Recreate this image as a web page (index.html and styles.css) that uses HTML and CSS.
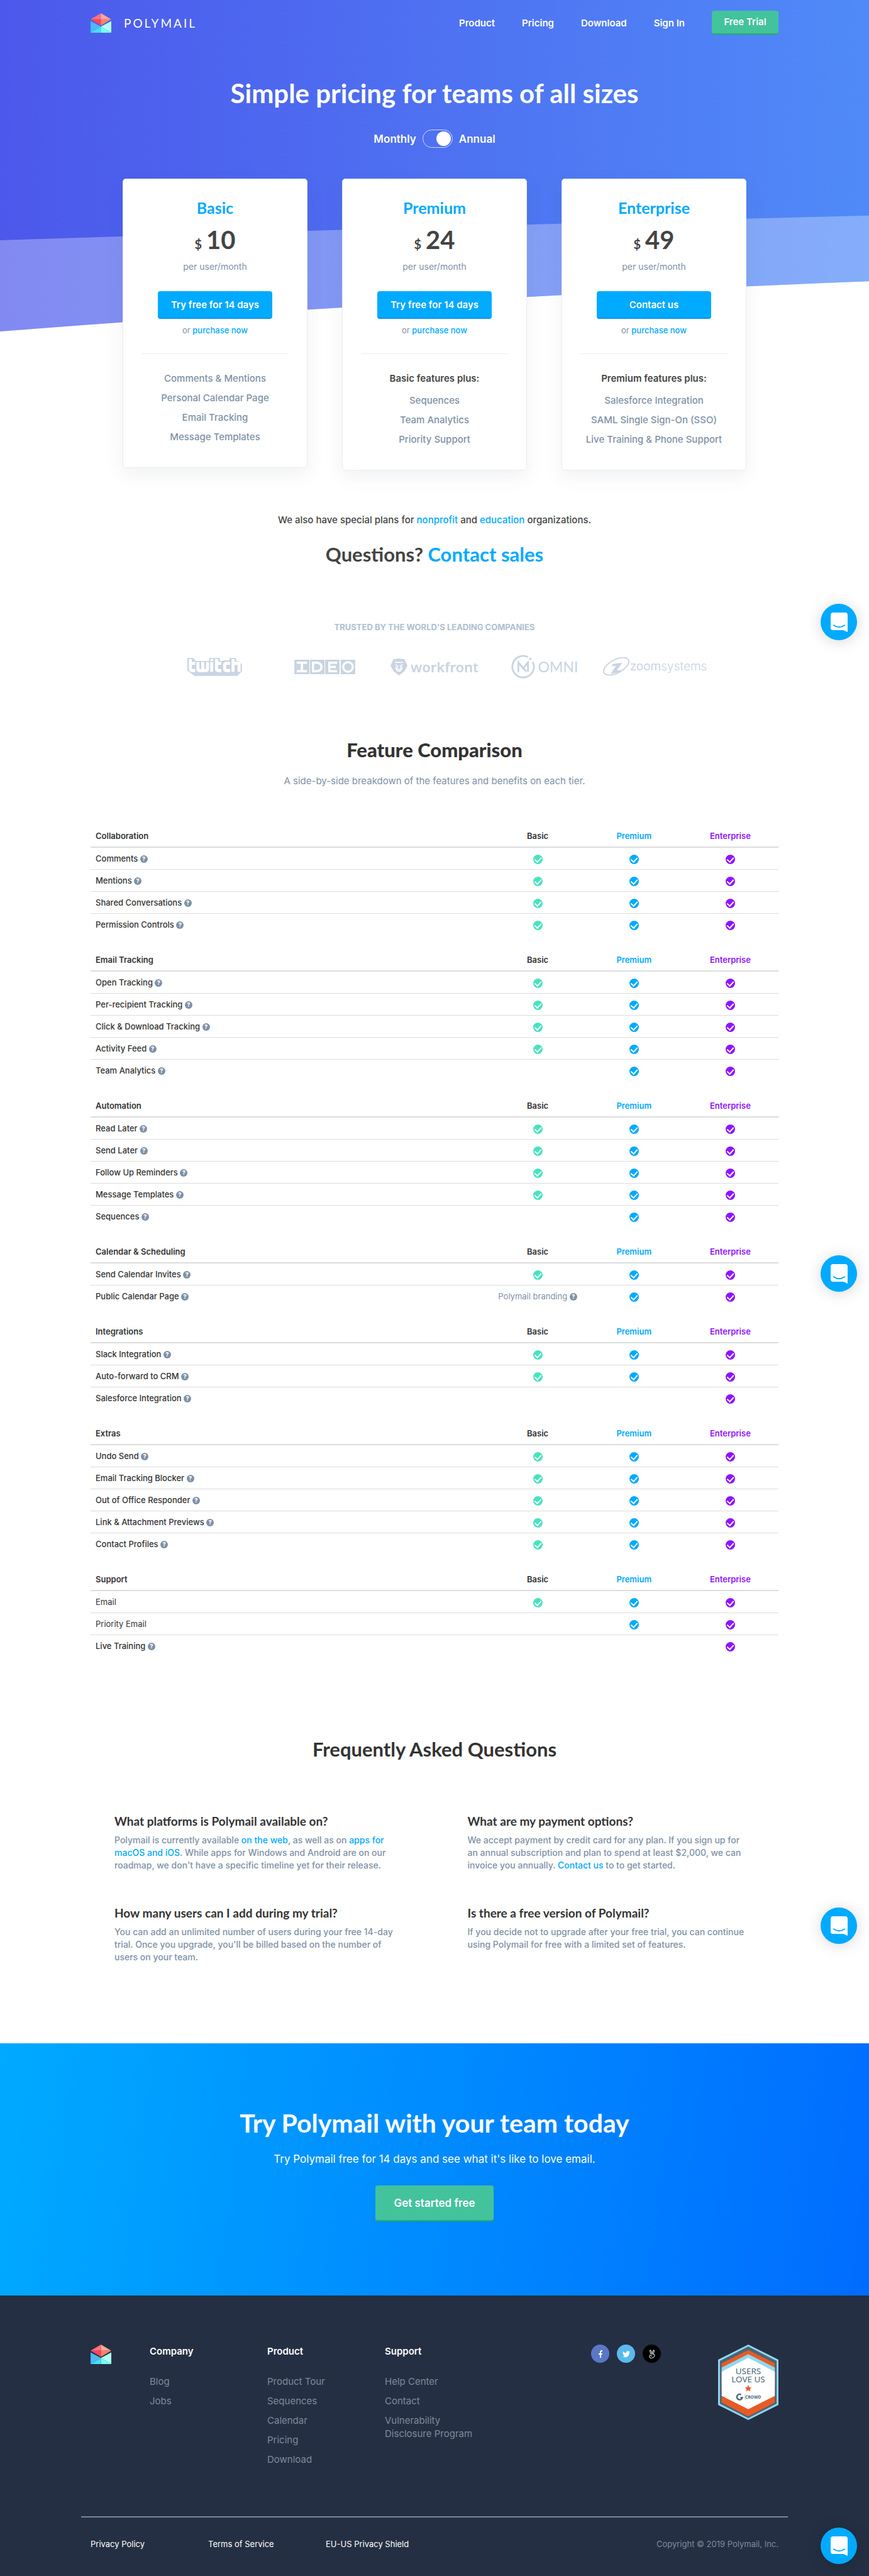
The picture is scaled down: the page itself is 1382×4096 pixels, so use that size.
FILE: index.html
```html
<!DOCTYPE html>
<html lang="en">
<head>
  <meta charset="utf-8">
  <title>Polymail Pricing</title>
  <meta name="viewport" content="width=device-width, initial-scale=1">
  <link rel="stylesheet" href="styles.css">
</head>
<body>
  <!-- shared icons -->
  <svg class="sprite" aria-hidden="true">
    <symbol id="logo" viewBox="0 0 34 32">
      <path fill="#ff7080" d="M17 0v10H0z"/>
      <path fill="#ffa699" d="M17 0v10h17z"/>
      <path fill="#ff4458" d="M0 10h17v10z"/>
      <path fill="#ff8366" d="M34 10H17v10z"/>
      <path fill="#4cb8f5" d="M0 13v19l17-10z"/>
      <path fill="#b0fff0" d="M34 13v19L17 22z"/>
      <path fill="#4adcf5" d="M0 32l17-10v10z"/>
      <path fill="#74fff0" d="M34 32L17 22v10z"/>
    </symbol>
    <symbol id="chat" viewBox="0 0 28 32">
      <path fill="#fff" d="M4 0h20a4 4 0 0 1 4 4v28l-7-3H4a4 4 0 0 1-4-4V4a4 4 0 0 1 4-4z"/>
      <path fill="none" stroke="#00aaff" stroke-width="2" stroke-linecap="round" d="M5 21q9 6 18 0"/>
    </symbol>
  </svg>

  <header class="hero">
    <svg class="hero-bg" viewBox="0 0 1440 549" preserveAspectRatio="none" aria-hidden="true">
      <defs>
        <linearGradient id="sky" x1="0" y1="0" x2="1" y2="0">
          <stop offset="0" stop-color="#4c58eb"/>
          <stop offset="1" stop-color="#508af8"/>
        </linearGradient>
      </defs>
      <path fill="url(#sky)" d="M0 0h1440v466Q720 493 0 549z"/>
      <path fill="#fff" fill-opacity=".3" d="M0 398Q720 375 1440 357v109Q720 493 0 549z"/>
    </svg>

    <div class="container">
      <nav class="navbar">
        <a class="brand" href="#"><svg class="logo"><use href="#logo"/></svg><span>POLYMAIL</span></a>
        <div class="nav-links">
          <a href="#">Product</a>
          <a href="#">Pricing</a>
          <a href="#">Download</a>
          <a href="#">Sign In</a>
          <a class="btn-green nav-trial" href="#">Free Trial</a>
        </div>
      </nav>

      <h1>Simple pricing for teams of all sizes</h1>

      <label class="billing">
        <span>Monthly</span>
        <input type="checkbox" class="switch" aria-label="Annual billing" checked>
        <span>Annual</span>
      </label>

      <div class="plans">
        <div class="plan">
          <h2>Basic</h2>
          <div class="price"><span class="currency">$</span>10</div>
          <p class="per">per user/month</p>
          <button class="btn-blue">Try free for 14 days</button>
          <p class="purchase">or <a href="#">purchase now</a></p>
          <ul>
            <li>Comments &amp; Mentions</li>
            <li>Personal Calendar Page</li>
            <li>Email Tracking</li>
            <li>Message Templates</li>
          </ul>
        </div>
        <div class="plan">
          <h2>Premium</h2>
          <div class="price"><span class="currency">$</span>24</div>
          <p class="per">per user/month</p>
          <button class="btn-blue">Try free for 14 days</button>
          <p class="purchase">or <a href="#">purchase now</a></p>
          <ul>
            <li class="plus">Basic features plus:</li>
            <li>Sequences</li>
            <li>Team Analytics</li>
            <li>Priority Support</li>
          </ul>
        </div>
        <div class="plan">
          <h2>Enterprise</h2>
          <div class="price"><span class="currency">$</span>49</div>
          <p class="per">per user/month</p>
          <button class="btn-blue">Contact us</button>
          <p class="purchase">or <a href="#">purchase now</a></p>
          <ul>
            <li class="plus">Premium features plus:</li>
            <li>Salesforce Integration</li>
            <li>SAML Single Sign-On (SSO)</li>
            <li>Live Training &amp; Phone Support</li>
          </ul>
        </div>
      </div>
    </div>
  </header>

  <main class="container">
    <section class="contact">
      <p>We also have special plans for <a href="#">nonprofit</a> and <a href="#">education</a> organizations.</p>
      <h2>Questions? <a href="#">Contact sales</a></h2>
    </section>

    <section class="trusted">
      <h3>TRUSTED BY THE WORLD'S LEADING COMPANIES</h3>
      <div class="companies">
        <svg width="87" height="29" viewBox="0 0 91 30" role="img" aria-label="Twitch">
          <path fill="#cad4e2" d="M0 0h10l4 5h22V0h18v5h4l3-1h9V0h11v5h3l7 6v11l-8 8H12L0 21z"/>
          <g fill="none" stroke="#fff" stroke-width="5">
            <path d="M5 2v16q0 3 3 3h5M5 9h8M17.500 7v11q0 3 3 3h10q3 0 3-3V7M25.500 7v13M40.500 7v16M40.500 2v3M48.500 2v16q0 3 3 3h5M48.500 9h8M71 9h-6q-3 0-3 3v6q0 3 3 3h6M76 2v21M76 9h7q3 0 3 3v11"/>
          </g>
        </svg>
        <svg width="97" height="23" viewBox="0 0 101 24" role="img" aria-label="IDEO">
          <path fill="#cad4e2" d="M0 0h25v24H0zM26 0h24v24H26zM51 0h24v24H51zM77 0h24v24H77z"/>
          <g fill="none" stroke="#fff" stroke-width="3.500">
            <path d="M4 5h17M4 19h17M12.500 5v14M31 5h5q9 0 9 7t-9 7h-5zM71 5H58v14h13M58 12h11"/>
            <ellipse cx="89" cy="12" rx="8" ry="8"/>
          </g>
        </svg>
        <div class="company">
          <svg width="27" height="27" viewBox="0 0 28 28" aria-hidden="true">
            <path fill="#cad4e2" d="M5 1l9-1 9 1 5 11-5 9-9 7-9-7-5-9z"/>
            <path fill="none" stroke="#fff" stroke-width="1.500" d="M7 6l4 1 3-1 3 1 4-1M8 10l4 2-1 5 3 2 3-2-1-5 4-2M9 13v4l3 4h4l3-4v-4"/>
          </svg>
          <span class="workfront">workfront</span>
        </div>
        <div class="company">
          <svg width="38" height="38" viewBox="0 0 40 40" aria-hidden="true">
            <g fill="none" stroke="#cad4e2" stroke-width="3">
              <path d="M28 4A18 18 0 1 0 36 12"/>
              <path d="M12 29V13l8 10 8-10v16M12 13l13 15"/>
            </g>
            <circle fill="#cad4e2" cx="32" cy="7" r="2"/>
          </svg>
          <span class="omni">OMNI</span>
        </div>
        <div class="company zoom">
          <svg width="44" height="30" viewBox="0 0 46 31" aria-hidden="true">
            <ellipse cx="23" cy="15" rx="23" ry="11" fill="none" stroke="#cad4e2" stroke-width="2" transform="rotate(-28 23 15)"/>
            <path fill="#cad4e2" d="M17 11l16-2-9 13 7-1-3 4-14 2 9-13-7 1z"/>
          </svg>
          <span><b>zoom</b>systems</span>
        </div>
      </div>
    </section>

    <section class="comparison">
      <h2>Feature Comparison</h2>
      <p>A side-by-side breakdown of the features and benefits on each tier.</p>

      <table>
        <tbody>
          <tr><th>Collaboration</th><th>Basic</th><th>Premium</th><th>Enterprise</th></tr>
          <tr><td>Comments <i class="help"></i></td><td><i class="check"></i></td><td><i class="check"></i></td><td><i class="check"></i></td></tr>
          <tr><td>Mentions <i class="help"></i></td><td><i class="check"></i></td><td><i class="check"></i></td><td><i class="check"></i></td></tr>
          <tr><td>Shared Conversations <i class="help"></i></td><td><i class="check"></i></td><td><i class="check"></i></td><td><i class="check"></i></td></tr>
          <tr><td>Permission Controls <i class="help"></i></td><td><i class="check"></i></td><td><i class="check"></i></td><td><i class="check"></i></td></tr>
        </tbody>
        <tbody>
          <tr><th>Email Tracking</th><th>Basic</th><th>Premium</th><th>Enterprise</th></tr>
          <tr><td>Open Tracking <i class="help"></i></td><td><i class="check"></i></td><td><i class="check"></i></td><td><i class="check"></i></td></tr>
          <tr><td>Per-recipient Tracking <i class="help"></i></td><td><i class="check"></i></td><td><i class="check"></i></td><td><i class="check"></i></td></tr>
          <tr><td>Click &amp; Download Tracking <i class="help"></i></td><td><i class="check"></i></td><td><i class="check"></i></td><td><i class="check"></i></td></tr>
          <tr><td>Activity Feed <i class="help"></i></td><td><i class="check"></i></td><td><i class="check"></i></td><td><i class="check"></i></td></tr>
          <tr><td>Team Analytics <i class="help"></i></td><td></td><td><i class="check"></i></td><td><i class="check"></i></td></tr>
        </tbody>
        <tbody>
          <tr><th>Automation</th><th>Basic</th><th>Premium</th><th>Enterprise</th></tr>
          <tr><td>Read Later <i class="help"></i></td><td><i class="check"></i></td><td><i class="check"></i></td><td><i class="check"></i></td></tr>
          <tr><td>Send Later <i class="help"></i></td><td><i class="check"></i></td><td><i class="check"></i></td><td><i class="check"></i></td></tr>
          <tr><td>Follow Up Reminders <i class="help"></i></td><td><i class="check"></i></td><td><i class="check"></i></td><td><i class="check"></i></td></tr>
          <tr><td>Message Templates <i class="help"></i></td><td><i class="check"></i></td><td><i class="check"></i></td><td><i class="check"></i></td></tr>
          <tr><td>Sequences <i class="help"></i></td><td></td><td><i class="check"></i></td><td><i class="check"></i></td></tr>
        </tbody>
        <tbody>
          <tr><th>Calendar &amp; Scheduling</th><th>Basic</th><th>Premium</th><th>Enterprise</th></tr>
          <tr><td>Send Calendar Invites <i class="help"></i></td><td><i class="check"></i></td><td><i class="check"></i></td><td><i class="check"></i></td></tr>
          <tr><td>Public Calendar Page <i class="help"></i></td><td class="note">Polymail branding <i class="help"></i></td><td><i class="check"></i></td><td><i class="check"></i></td></tr>
        </tbody>
        <tbody>
          <tr><th>Integrations</th><th>Basic</th><th>Premium</th><th>Enterprise</th></tr>
          <tr><td>Slack Integration <i class="help"></i></td><td><i class="check"></i></td><td><i class="check"></i></td><td><i class="check"></i></td></tr>
          <tr><td>Auto-forward to CRM <i class="help"></i></td><td><i class="check"></i></td><td><i class="check"></i></td><td><i class="check"></i></td></tr>
          <tr><td>Salesforce Integration <i class="help"></i></td><td></td><td></td><td><i class="check"></i></td></tr>
        </tbody>
        <tbody>
          <tr><th>Extras</th><th>Basic</th><th>Premium</th><th>Enterprise</th></tr>
          <tr><td>Undo Send <i class="help"></i></td><td><i class="check"></i></td><td><i class="check"></i></td><td><i class="check"></i></td></tr>
          <tr><td>Email Tracking Blocker <i class="help"></i></td><td><i class="check"></i></td><td><i class="check"></i></td><td><i class="check"></i></td></tr>
          <tr><td>Out of Office Responder <i class="help"></i></td><td><i class="check"></i></td><td><i class="check"></i></td><td><i class="check"></i></td></tr>
          <tr><td>Link &amp; Attachment Previews <i class="help"></i></td><td><i class="check"></i></td><td><i class="check"></i></td><td><i class="check"></i></td></tr>
          <tr><td>Contact Profiles <i class="help"></i></td><td><i class="check"></i></td><td><i class="check"></i></td><td><i class="check"></i></td></tr>
        </tbody>
        <tbody>
          <tr><th>Support</th><th>Basic</th><th>Premium</th><th>Enterprise</th></tr>
          <tr><td class="plain">Email</td><td><i class="check"></i></td><td><i class="check"></i></td><td><i class="check"></i></td></tr>
          <tr><td class="plain">Priority Email</td><td></td><td><i class="check"></i></td><td><i class="check"></i></td></tr>
          <tr><td>Live Training <i class="help"></i></td><td></td><td></td><td><i class="check"></i></td></tr>
        </tbody>
      </table>
    </section>

    <section class="faq">
      <h2>Frequently Asked Questions</h2>
      <div class="faq-grid">
        <div>
          <h3>What platforms is Polymail available on?</h3>
          <p>Polymail is currently available <a href="#">on the web</a>, as well as on <a href="#">apps for macOS and iOS</a>. While apps for Windows and Android are on our roadmap, we don't have a specific timeline yet for their release.</p>
        </div>
        <div>
          <h3>What are my payment options?</h3>
          <p>We accept payment by credit card for any plan. If you sign up for an annual subscription and plan to spend at least $2,000, we can invoice you annually. <a href="#">Contact us</a> to to get started.</p>
        </div>
        <div>
          <h3>How many users can I add during my trial?</h3>
          <p>You can add an unlimited number of users during your free 14-day trial. Once you upgrade, you'll be billed based on the number of users on your team.</p>
        </div>
        <div>
          <h3>Is there a free version of Polymail?</h3>
          <p>If you decide not to upgrade after your free trial, you can continue using Polymail for free with a limited set of features.</p>
        </div>
      </div>
    </section>
  </main>

  <section class="cta">
    <h2>Try Polymail with your team today</h2>
    <p>Try Polymail free for 14 days and see what it's like to love email.</p>
    <button class="btn-green">Get started free</button>
  </section>

  <footer class="footer">
    <div class="container footer-top">
      <a class="footer-logo" href="#" aria-label="Polymail"><svg class="logo"><use href="#logo"/></svg></a>
      <div class="footer-col">
        <h4>Company</h4>
        <a href="#">Blog</a>
        <a href="#">Jobs</a>
      </div>
      <div class="footer-col">
        <h4>Product</h4>
        <a href="#">Product Tour</a>
        <a href="#">Sequences</a>
        <a href="#">Calendar</a>
        <a href="#">Pricing</a>
        <a href="#">Download</a>
      </div>
      <div class="footer-col">
        <h4>Support</h4>
        <a href="#">Help Center</a>
        <a href="#">Contact</a>
        <a href="#">Vulnerability Disclosure Program</a>
      </div>
      <div class="social">
        <a class="facebook" href="#" aria-label="Facebook">
          <svg width="12" height="12" viewBox="0 0 12 12"><path fill="#fff" d="M5 12V7H3V5h2V3q0-3 3-3h1v2H8Q7 2 7 3v2h2L8.700 7H7v5z"/></svg>
        </a>
        <a class="twitter" href="#" aria-label="Twitter">
          <svg width="12" height="12" viewBox="0 0 24 24"><path fill="#fff" d="M24 5q-1 .7-2.800.9Q22.800 4.800 23.300 3q-1.500 1-3.100 1.300A5 5 0 0 0 11.800 9Q5.600 8.600 1.700 4a5 5 0 0 0 1.500 6.500Q2 10.500 1 9.900q0 3.800 3.900 4.900-1 .3-2.200.1.900 3 4.600 3.400Q4.300 20.700 0 20.300q3.500 2.200 7.600 2.200C16.800 22.500 21.900 15 21.500 7.500Q23 6.500 24 5z"/></svg>
        </a>
        <a class="angellist" href="#" aria-label="AngelList">
          <svg width="12" height="14" viewBox="0 0 12 14" fill="none" stroke="#fff"><path d="M4 7L2.500 2q0-1.500 1.500-1L6 6l2-5q1.500-.5 1.500 1L8 7q2 0 2 2.500T6 13.500 2 10q0-2 2-1l2 2M4 7h4"/></svg>
        </a>
      </div>
      <svg class="badge" viewBox="0 0 100 125" role="img" aria-label="Users love us, G2 Crowd">
        <path fill="#8fd8f2" d="M50 0l50 25v75l-50 25L0 100V25z"/>
        <path fill="#4a6676" d="M50 3l47 24v71l-47 24L3 98V27z"/>
        <path fill="#e85a24" d="M50 9l44 22v65l-44 23L6 96V31z"/>
        <path fill="#8fd8f2" d="M50 16l44 22v30H6V38z"/>
        <path fill="#fff" d="M50 22l44 23v40l-44 22L6 85V45z"/>
        <path fill="#e85a24" d="M50 67l1.600 3.800 4 .3-3 2.600 1 4-3.600-2.200-3.600 2.200 1-4-3-2.600 4-.3z"/>
        <path fill="none" stroke="#4a6676" stroke-width="2.500" d="M38 83a4.500 4.500 0 1 0 2 5h-3"/>
        <path stroke="#a9b8c0" stroke-width=".7" d="M44.500 82v10"/>
        <text x="50" y="49" class="badge-title">USERS</text>
        <text x="50" y="62" class="badge-title">LOVE US</text>
        <text x="58" y="90" class="badge-small">CROWD</text>
      </svg>
    </div>
    <div class="footer-bottom">
      <a href="#">Privacy Policy</a>
      <a href="#">Terms of Service</a>
      <a href="#">EU-US Privacy Shield</a>
      <span>Copyright © 2019 Polymail, Inc.</span>
    </div>
  </footer>

  <button class="chat chat-1" aria-label="Open chat"><svg><use href="#chat"/></svg></button>
  <button class="chat chat-2" aria-label="Open chat"><svg><use href="#chat"/></svg></button>
  <button class="chat chat-3" aria-label="Open chat"><svg><use href="#chat"/></svg></button>
  <button class="chat chat-4" aria-label="Open chat"><svg><use href="#chat"/></svg></button>
</body>
</html>
```
FILE: styles.css
```css
* {
  box-sizing: border-box;
}

body {
  margin: 0;
  position: relative;
  font-family: Inter, "Liberation Sans", sans-serif;
  font-size: 15px;
  color: #444;
  background: #fff;
}

h1, h2, h3, h4, p, ul {
  margin: 0;
  padding: 0;
}

h1, h2, h3 {
  font-family: Lato, "Liberation Sans", sans-serif;
  font-weight: 700;
}

a {
  color: #00aaff;
  text-decoration: none;
}

button {
  border: none;
  padding: 0;
  font-family: inherit;
  cursor: pointer;
}

.sprite {
  position: absolute;
  width: 0;
  height: 0;
}

.container {
  max-width: 1124px;
  margin: 0 auto;
  padding: 0 15px;
}

.logo {
  display: block;
  width: 33px;
  height: 31px;
}

/* hero */
.hero {
  position: relative;
  padding-top: 17px;
}

.hero-bg {
  position: absolute;
  top: 0;
  left: 0;
  width: 100%;
  height: 527px;
  z-index: -1;
}

.navbar {
  display: flex;
  justify-content: space-between;
  align-items: center;
  height: 38px;
}

.brand {
  display: flex;
  align-items: center;
  gap: 20px;
  color: #fff;
  font-family: Lato, sans-serif;
  font-size: 19px;
  letter-spacing: 3px;
}

.nav-links {
  display: flex;
  align-items: center;
  gap: 43px;
}

.nav-links a {
  color: #fff;
  font-size: 15px;
  font-weight: 600;
}

.btn-green {
  background: #43c39b;
  border-bottom: 2px solid #27ae60;
  border-radius: 4px;
  color: #fff;
  font-weight: 600;
}

.nav-links .nav-trial {
  width: 106px;
  line-height: 36px;
  text-align: center;
}

.hero h1 {
  margin-top: 69px;
  font-size: 42px;
  line-height: 48px;
  text-align: center;
  color: #fff;
}

.billing {
  display: flex;
  justify-content: center;
  align-items: center;
  gap: 10px;
  margin-top: 34px;
  height: 29px;
  color: #fff;
  font-size: 17px;
  font-weight: 600;
}

.switch {
  appearance: none;
  display: flex;
  align-items: center;
  width: 48px;
  height: 29px;
  margin: 0;
  padding: 0 2px;
  border: 1px solid #cfd4ff;
  border-radius: 15px;
}

.switch::before {
  content: "";
  width: 23px;
  height: 23px;
  border-radius: 50%;
  background: #fff;
}

.switch:checked::before {
  margin-left: auto;
}

.plans {
  display: flex;
  justify-content: center;
  align-items: flex-start;
  gap: 55px;
  margin-top: 49px;
}

.plan {
  width: 294px;
  padding: 30px 29px 33px;
  border: 1px solid #ececec;
  border-radius: 5px;
  background: #fff;
  box-shadow: 0 10px 30px rgba(60, 80, 100, 0.08);
  text-align: center;
}

.plan h2 {
  font-size: 25px;
  line-height: 30px;
  color: #00aaff;
}

.price {
  margin-top: 13px;
  font-family: Lato, sans-serif;
  font-size: 40px;
  font-weight: 700;
  line-height: 46px;
}

.currency {
  margin-right: 7px;
  font-size: 20px;
  line-height: 20px;
}

.per {
  margin-top: 10px;
  font-size: 14px;
  line-height: 20px;
  color: #7f91a6;
}

.btn-blue {
  width: 182px;
  height: 44px;
  margin-top: 29px;
  background: #00aaff;
  border-bottom: 2px solid #0096e6;
  border-radius: 4px;
  color: #fff;
  font-size: 15px;
  font-weight: 600;
}

.purchase {
  margin-top: 8px;
  font-size: 13px;
  line-height: 20px;
  color: #7f91a6;
}

.purchase a {
  font-weight: 500;
}

.plan ul {
  margin-top: 27px;
  padding-top: 23px;
  border-top: 1px solid #ececec;
  list-style: none;
  font-size: 15px;
  font-weight: 500;
  line-height: 31px;
  color: #7f91a6;
  white-space: nowrap;
}

.plan .plus {
  margin-bottom: 4px;
  font-weight: 600;
  color: #444;
}

/* contact */
.contact {
  margin-top: 68px;
  text-align: center;
}

.contact p {
  font-weight: 500;
  line-height: 22px;
}

.contact h2 {
  margin-top: 23px;
  font-size: 31px;
  line-height: 40px;
}

.trusted {
  margin-top: 86px;
  text-align: center;
}

.trusted h3 {
  font-family: Inter, sans-serif;
  font-size: 13px;
  font-weight: 700;
  line-height: 20px;
  color: #b1bfd0;
}

.companies {
  display: grid;
  grid-template-columns: repeat(5, 175px);
  justify-content: center;
  justify-items: center;
  align-items: center;
  height: 40px;
  margin-top: 33px;
  color: #cad4e2;
}

.company {
  display: flex;
  align-items: center;
  gap: 5px;
  line-height: 30px;
}

.workfront {
  font-family: "Noto Sans", sans-serif;
  font-size: 22px;
  font-weight: 600;
}

.omni {
  font-family: Lato, sans-serif;
  font-size: 23px;
}

.company.zoom {
  gap: 0;
  font-size: 19px;
  font-weight: 300;
}

/* comparison */
.comparison {
  margin-top: 92px;
  text-align: center;
}

.comparison h2,
.faq h2 {
  font-size: 31px;
  line-height: 40px;
  color: #333;
}

.comparison h2 {
  font-weight: 900;
}

.comparison p {
  margin-top: 19px;
  line-height: 22px;
  color: #7f91a6;
}

.comparison table {
  width: 100%;
  margin-top: 37px;
  border-spacing: 0;
  table-layout: fixed;
  font-size: 13px;
  line-height: 20px;
  color: #333;
}

.comparison th {
  width: 14%;
  padding: 29px 0 7px;
  border-bottom: 2px solid #ddd;
  font-weight: 600;
}

.comparison th:first-child {
  width: 58%;
}

.comparison th:first-child,
.comparison td:first-child {
  padding-left: 8px;
  text-align: left;
}

.comparison td {
  height: 35px;
  padding: 0;
  border-top: 1px solid #ddd;
  font-weight: 500;
}

.comparison tr:nth-child(2) td {
  height: 34px;
  border-top: none;
}

.comparison th:nth-child(3) {
  color: #00aaff;
}

.comparison th:nth-child(4) {
  color: #9013fe;
}

.comparison .plain {
  font-weight: 400;
}

.comparison .note {
  font-weight: 400;
  color: #7f91a6;
}

.check {
  display: inline-flex;
  justify-content: center;
  width: 15px;
  height: 15px;
  border-radius: 50%;
  background: #48e3bf;
  vertical-align: middle;
}

.check::before {
  content: "";
  width: 5px;
  height: 8px;
  margin-top: 2px;
  border: solid #fff;
  border-width: 0 2px 2px 0;
  transform: rotate(42deg);
}

td:nth-child(3) .check {
  background: #00aaff;
}

td:nth-child(4) .check {
  background: #9013fe;
}

.help {
  display: inline-block;
  width: 12px;
  height: 12px;
  border-radius: 50%;
  background: #7f91a6;
  color: #fff;
  font-size: 9px;
  font-style: normal;
  font-weight: 800;
  line-height: 12px;
  text-align: center;
  vertical-align: 1px;
}

.help::before {
  content: "?";
}

/* faq */
.faq {
  margin-top: 127px;
}

.faq h2 {
  text-align: center;
}

.faq-grid {
  display: grid;
  grid-template-columns: 1fr 1fr;
  gap: 54px 105px;
  margin-top: 83px;
  padding: 0 38px;
}

.faq h3 {
  font-size: 19px;
  line-height: 24px;
  color: #333;
}

.faq p {
  max-width: 448px;
  margin-top: 8px;
  font-size: 14px;
  font-weight: 500;
  line-height: 20px;
  color: #7f91a6;
}

/* call to action */
.cta {
  margin-top: 127px;
  padding: 99px 15px 118px;
  background: linear-gradient(98deg, #00aaff, #006cff);
  color: #fff;
  text-align: center;
}

.cta h2 {
  font-size: 41px;
  line-height: 56px;
}

.cta p {
  margin-top: 17px;
  font-size: 17px;
  line-height: 24px;
}

.cta button {
  display: block;
  width: 188px;
  height: 57px;
  margin: 30px auto 0;
  font-size: 17px;
}

/* footer */
.footer {
  padding-top: 78px;
  background: #252f43;
}

.footer-top {
  display: flex;
  align-items: flex-start;
}

.footer-logo {
  width: 94px;
}

.footer-col {
  display: flex;
  flex-direction: column;
  align-items: flex-start;
  gap: 10px;
  width: 187px;
  padding-right: 30px;
}

.footer-col h4 {
  margin-bottom: 16px;
  font-size: 15px;
  font-weight: 600;
  line-height: 22px;
  color: #fff;
}

.footer-col a {
  line-height: 21px;
  color: #7c8b9c;
}

.social {
  display: flex;
  gap: 12px;
  margin-left: auto;
}

.social a {
  display: flex;
  justify-content: center;
  align-items: center;
  width: 29px;
  height: 29px;
  border-radius: 50%;
}

.facebook {
  background: #5a78c7;
}

.twitter {
  background: #5abaec;
}

.angellist {
  background: #000;
}

.badge {
  width: 96px;
  height: 120px;
  margin-left: 91px;
}

.badge-title {
  font: 14px "Noto Sans", sans-serif;
  text-anchor: middle;
  fill: #4a6676;
}

.badge-small {
  font: 700 7px "Open Sans", sans-serif;
  text-anchor: middle;
  fill: #4a6676;
}

.footer-bottom {
  display: flex;
  max-width: 1124px;
  margin: 80px auto 0;
  padding: 32px 15px 41px;
  border-top: 2px solid #748899;
  font-size: 13px;
  line-height: 20px;
}

.footer-bottom a {
  width: 187px;
  color: #fff;
}

.footer-bottom span {
  margin-left: auto;
  color: #7c8b9c;
}

/* chat launcher, floats over the page once per screenful */
.chat {
  position: absolute;
  right: 19px;
  display: flex;
  justify-content: center;
  align-items: center;
  width: 58px;
  height: 58px;
  border-radius: 50%;
  background: #00aaff;
  box-shadow: 0 2px 24px rgba(0, 0, 0, 0.16);
}

.chat svg {
  width: 27px;
  height: 31px;
}

.chat-1 {
  top: 960px;
}

.chat-2 {
  top: 1996px;
}

.chat-3 {
  top: 3033px;
}

.chat-4 {
  bottom: 19px;
}
```
